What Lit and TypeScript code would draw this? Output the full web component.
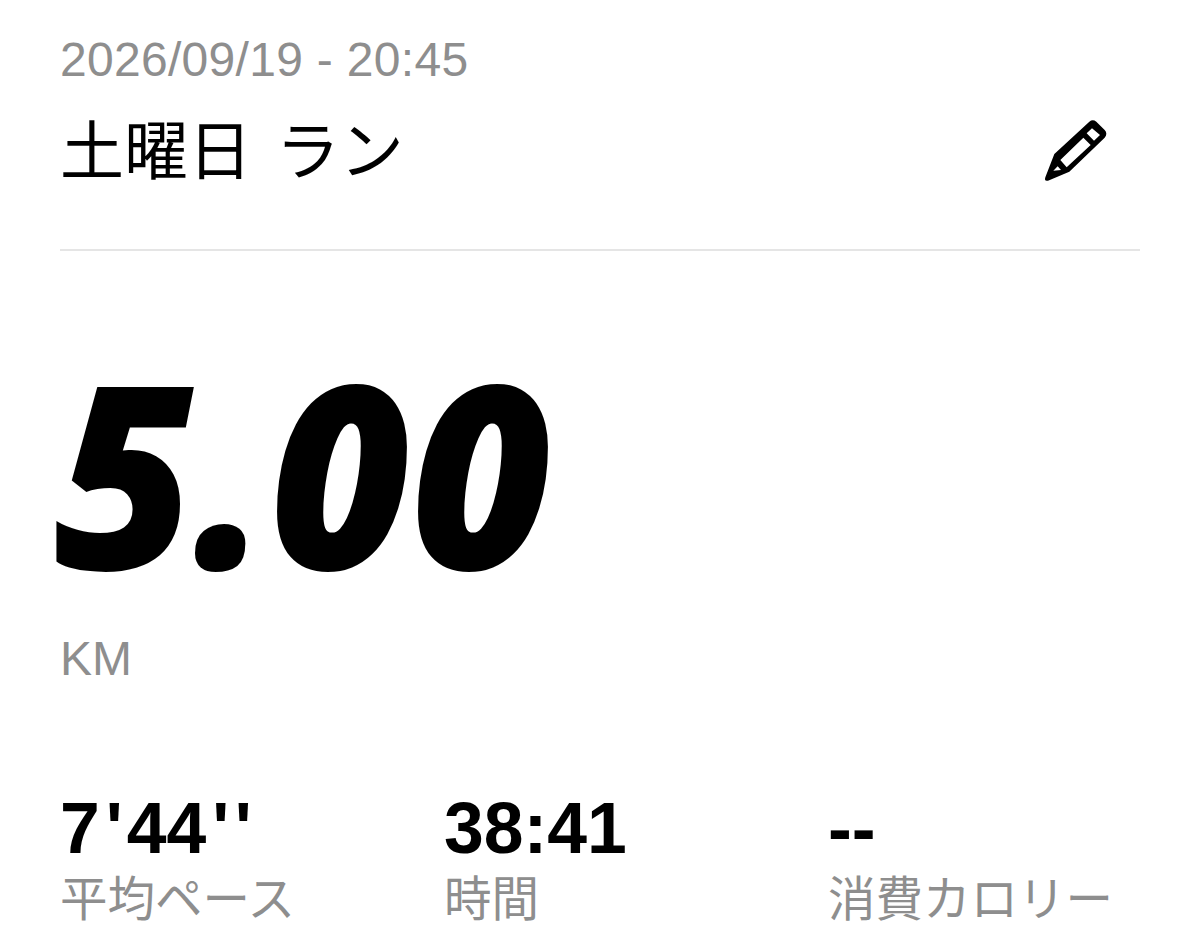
import { LitElement, html, css } from "lit";
import { customElement } from "lit/decorators.js";

@customElement("app-root")
export class AppRoot extends LitElement {
  static styles = css`
    :host { display: block; width: 1200px; height: 941px; overflow: hidden; background: #fff; font-family: "Liberation Sans", "Noto Sans CJK JP", sans-serif; }
    .page { padding: 36px 60px 0 60px; }
    .date { font-size: 48px; line-height: 48px; color: #8e8e8e; letter-spacing: 0.3px; }
    .title-row { display: flex; justify-content: space-between; align-items: center; margin-top: 26px; height: 84px; }
    .title { font-size: 64px; line-height: 84px; color: #000; font-weight: 400; white-space: pre; word-spacing: 6px; }
    .pencil { width: 70px; height: 70px; display: block; margin-right: 30px; }
    .rule { height: 2px; background: #e5e5e5; margin-top: 55px; }
    .big { font-family: "Noto Sans", sans-serif; font-weight: 900; font-style: italic; font-size: 256px; line-height: 240px; color: #000; margin-top: 99px; margin-left: -6px; transform: scaleX(0.95); transform-origin: left center; }
    .unit { font-size: 48px; line-height: 48px; color: #8e8e8e; margin-top: 45px; }
    .stats { display: grid; grid-template-columns: 384px 384px 1fr; margin-top: 109px; }
    .val { font-size: 71.5px; line-height: 72px; font-weight: 700; color: #000; }
    .ap { padding: 0 4px 0 6px; }
    .q { letter-spacing: 5.5px; margin-left: 6px; }
    .lab { font-size: 47.5px; line-height: 56px; color: #8e8e8e; white-space: nowrap; margin-top: 8px; font-weight: 400; }
  `;
  render() {
    return html`<div class="page">
      <div class="date">2026/09/19 - 20:45</div>
      <div class="title-row">
        <div class="title">土曜日 ラン</div>
        <svg class="pencil" viewBox="60 51 210 210">
          <path fill="#000" fill-rule="evenodd" d="M76 232 L103 162 L208 65 Q218 57 229 65 L254 90 Q264 101 254 113 L148 215 L84 242 Q72 245 76 232 Z M121 180 L190 113 L212 135 L140 202 Z M200 100 L216 85 L240 105 L222 122 Z M100 212 L113 199 L123 210 Z"/>
        </svg>
      </div>
      <div class="rule"></div>
      <div class="big">5.00</div>
      <div class="unit">KM</div>
      <div class="stats">
        <div><div class="val">7<span class="ap">'</span>44<span class="q">''</span></div><div class="lab">平均ペース</div></div>
        <div><div class="val">38:41</div><div class="lab">時間</div></div>
        <div><div class="val">--</div><div class="lab">消費カロリー</div></div>
      </div>
    </div>`;
  }
}
